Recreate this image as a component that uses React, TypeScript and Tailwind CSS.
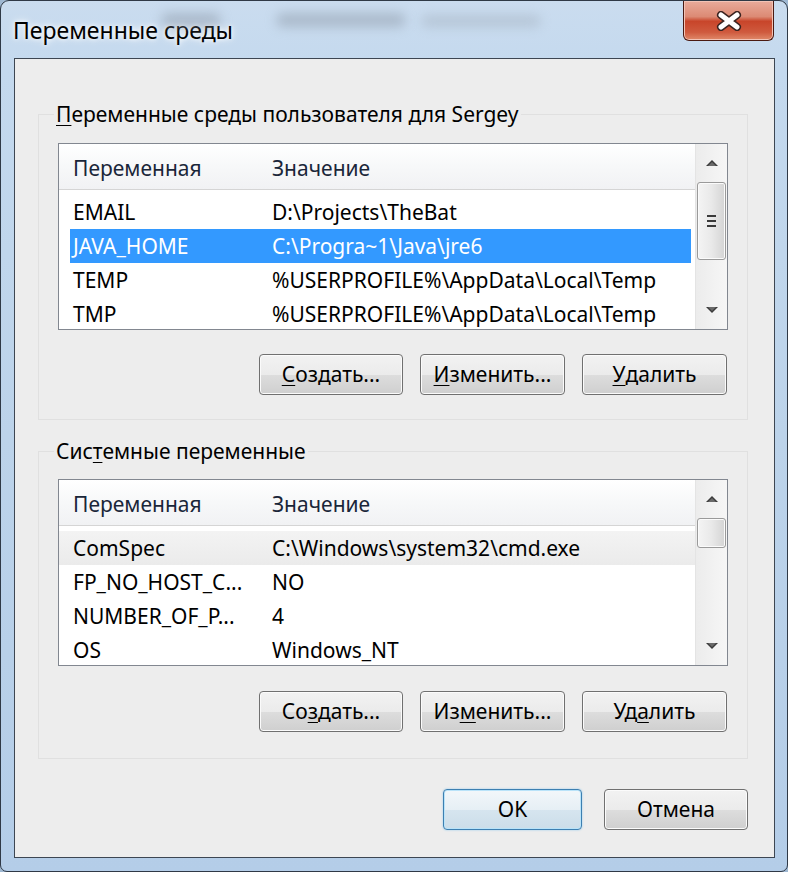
import React from 'react'

type Row = { name: string; value: string; selected?: boolean; hover?: boolean }

const userRows: Row[] = [
  { name: 'EMAIL', value: 'D:\\Projects\\TheBat' },
  { name: 'JAVA_HOME', value: 'C:\\Progra~1\\Java\\jre6', selected: true },
  { name: 'TEMP', value: '%USERPROFILE%\\AppData\\Local\\Temp' },
  { name: 'TMP', value: '%USERPROFILE%\\AppData\\Local\\Temp' },
]

const systemRows: Row[] = [
  { name: 'ComSpec', value: 'C:\\Windows\\system32\\cmd.exe', hover: true },
  { name: 'FP_NO_HOST_C...', value: 'NO' },
  { name: 'NUMBER_OF_P...', value: '4' },
  { name: 'OS', value: 'Windows_NT' },
]

function Arrow({ down }: { down?: boolean }) {
  return (
    <svg width="12" height="8" viewBox="0 0 12 8" className={down ? 'rotate-180' : ''}>
      <path d="M0 7 L6 1 L12 7 Z" fill="#3b3b3b" />
      <path d="M2 7 L6 3 L10 7 Z" fill="#6a6a6a" />
    </svg>
  )
}

function ScrollBar({ thumb, grip }: { thumb: number; grip?: boolean }) {
  return (
    <div className="flex w-[32px] flex-col border-l border-[#e4e4e4] bg-[linear-gradient(to_right,#ececec,#f6f6f6)]">
      <div className="flex h-[38px] items-center justify-center">
        <Arrow />
      </div>
      <div
        className="mx-[1px] flex items-center justify-center rounded-[3px] border border-[#9a9a9a] bg-[linear-gradient(to_right,#f4f4f4,#e9e9e9_50%,#d4d4d4)] shadow-[inset_0_0_0_1px_#fbfbfb]"
        style={{ height: thumb }}
      >
        {grip && (
          <div className="flex flex-col gap-[3px]">
            <div className="h-[2px] w-[9px] bg-[#3a3a3a]" />
            <div className="h-[2px] w-[9px] bg-[#3a3a3a]" />
            <div className="h-[2px] w-[9px] bg-[#3a3a3a]" />
          </div>
        )}
      </div>
      <div className="flex-1" />
      <div className="flex h-[38px] items-center justify-center">
        <Arrow down />
      </div>
    </div>
  )
}

function ListBox({ rows, thumb, grip }: { rows: Row[]; thumb: number; grip?: boolean }) {
  return (
    <div className="ml-[4px] flex h-[187px] w-[670px] overflow-hidden border border-[#828790] bg-white">
      <div className="flex min-w-0 flex-1 flex-col">
        <div className="flex h-[46px] shrink-0 items-center border-b border-[#d5d5d5] bg-[linear-gradient(to_bottom,#ffffff,#f7f8f9_50%,#f1f2f4)] pt-[3px] text-[#1a2639]">
          <div className="w-[213px] pl-[14px]">Переменная</div>
          <div>Значение</div>
        </div>
        <div className="flex flex-col pt-[5px]">
          {rows.map((r) => (
            <div
              key={r.name}
              className={
                r.selected
                  ? 'ml-[11px] mr-[4px] flex h-[34px] shrink-0 items-center bg-[#3399ff] px-[3px] text-white'
                  : r.hover
                    ? 'flex h-[34px] shrink-0 items-center bg-[linear-gradient(to_bottom,#f3f3f3,#ebebeb)] px-[14px] text-black'
                    : 'flex h-[34px] shrink-0 items-center px-[14px] text-black'
              }
            >
              <div className="w-[199px] shrink-0 whitespace-nowrap">{r.name}</div>
              <div className="whitespace-nowrap">{r.value}</div>
            </div>
          ))}
        </div>
      </div>
      <ScrollBar thumb={thumb} grip={grip} />
    </div>
  )
}

function Btn({ children, w = 145, def }: { children: React.ReactNode; w?: number; def?: boolean }) {
  return (
    <button
      className={
        def
          ? 'flex h-[41px] items-center justify-center rounded-[4px] border border-[#3c7fb1] bg-[linear-gradient(to_bottom,#f2f7fa,#e6eff5_50%,#d6e5ef_51%,#cbdde9)] text-black shadow-[inset_0_0_0_1px_#b9e3f9,0_0_2px_#8cc8ee]'
          : 'flex h-[41px] items-center justify-center rounded-[4px] border border-[#707070] bg-[linear-gradient(to_bottom,#f2f2f2,#ebebeb_50%,#dddddd_51%,#cfcfcf)] text-black shadow-[inset_0_0_0_1px_#fbfbfb]'
      }
      style={{ width: w }}
    >
      {children}
    </button>
  )
}

function U({ children }: { children: React.ReactNode }) {
  return <span className="underline decoration-1 underline-offset-[3px]">{children}</span>
}

export default function App() {
  return (
    <div className="h-[872px] w-[788px] bg-[#9fb8d2] font-['Noto_Sans',sans-serif] text-[21px] leading-none">
      <div className="relative flex h-full flex-col overflow-hidden rounded-t-[9px] rounded-b-[7px] border border-[#2f3946] bg-[linear-gradient(to_bottom,#cadcef,#c4d9ee_8%,#bcd3ea_50%,#b4cde8)]">
        {/* blurred backdrop behind glass */}
        <div className="pointer-events-none absolute left-[160px] top-[12px] h-[14px] w-[60px] rounded-full bg-[#8c98a6] opacity-50 blur-[6px]" />
        <div className="pointer-events-none absolute left-[275px] top-[12px] h-[14px] w-[130px] rounded-full bg-[#8c98a6] opacity-50 blur-[6px]" />
        <div className="pointer-events-none absolute left-[420px] top-[14px] h-[12px] w-[120px] rounded-full bg-[#9aa5b2] opacity-40 blur-[6px]" />

        {/* title bar */}
        <div className="flex h-[57px] shrink-0 items-start justify-between">
          <div className="pl-[12px] pt-[18px] text-[23px] text-black [text-shadow:0_0_8px_#ffffff,0_0_4px_#ffffff]">
            Переменные среды
          </div>
          <div className="mr-[13px] flex h-[40px] w-[91px] items-center justify-center rounded-b-[6px] border border-t-0 border-[#4a1a12] bg-[linear-gradient(to_bottom,#e9ab9b,#dc8a74_40%,#c8452a_52%,#cf5a3e_80%,#e08a6a)] shadow-[inset_0_0_0_1px_#f2c3b6]">
            <svg width="26" height="20" viewBox="0 0 26 20">
              <path d="M5 4 L21 16 M21 4 L5 16" stroke="#3a2320" strokeWidth="8" strokeLinecap="round" />
              <path d="M5 4 L21 16 M21 4 L5 16" stroke="#ffffff" strokeWidth="5" strokeLinecap="round" />
            </svg>
          </div>
        </div>

        {/* client area */}
        <div className="mb-[13px] ml-[13px] mr-[12px] flex flex-1 flex-col border border-[#3d4652] bg-[#ededed]">
          <fieldset className="ml-[23px] mr-[26px] mt-[40px] border border-[#e0e0e0] pb-[24px] pl-[15px] pr-[19px] pt-[14px]">
            <legend className="px-[2px] leading-[30px] text-black">
              <U>П</U>еременные среды пользователя для Sergey
            </legend>
            <ListBox rows={userRows} thumb={78} grip />
            <div className="mt-[24px] flex justify-end gap-[17px] pr-[1px]">
              <Btn w={144}>
                <U>С</U>оздать...
              </Btn>
              <Btn>
                <U>И</U>зменить...
              </Btn>
              <Btn>
                <U>У</U>далить
              </Btn>
            </div>
          </fieldset>

          <fieldset className="ml-[23px] mr-[26px] mt-[16px] border border-[#e0e0e0] pb-[26px] pl-[15px] pr-[19px] pt-[13px]">
            <legend className="px-[2px] leading-[30px] text-black">
              Сис<U>т</U>емные переменные
            </legend>
            <ListBox rows={systemRows} thumb={30} />
            <div className="mt-[25px] flex justify-end gap-[17px] pr-[1px]">
              <Btn w={144}>
                Со<U>з</U>дать...
              </Btn>
              <Btn>
                Из<U>м</U>енить...
              </Btn>
              <Btn>
                Уд<U>а</U>лить
              </Btn>
            </div>
          </fieldset>

          <div className="mr-[26px] mt-[30px] flex justify-end gap-[22px]">
            <Btn w={139} def>
              OK
            </Btn>
            <Btn w={144}>Отмена</Btn>
          </div>
        </div>
      </div>
    </div>
  )
}
